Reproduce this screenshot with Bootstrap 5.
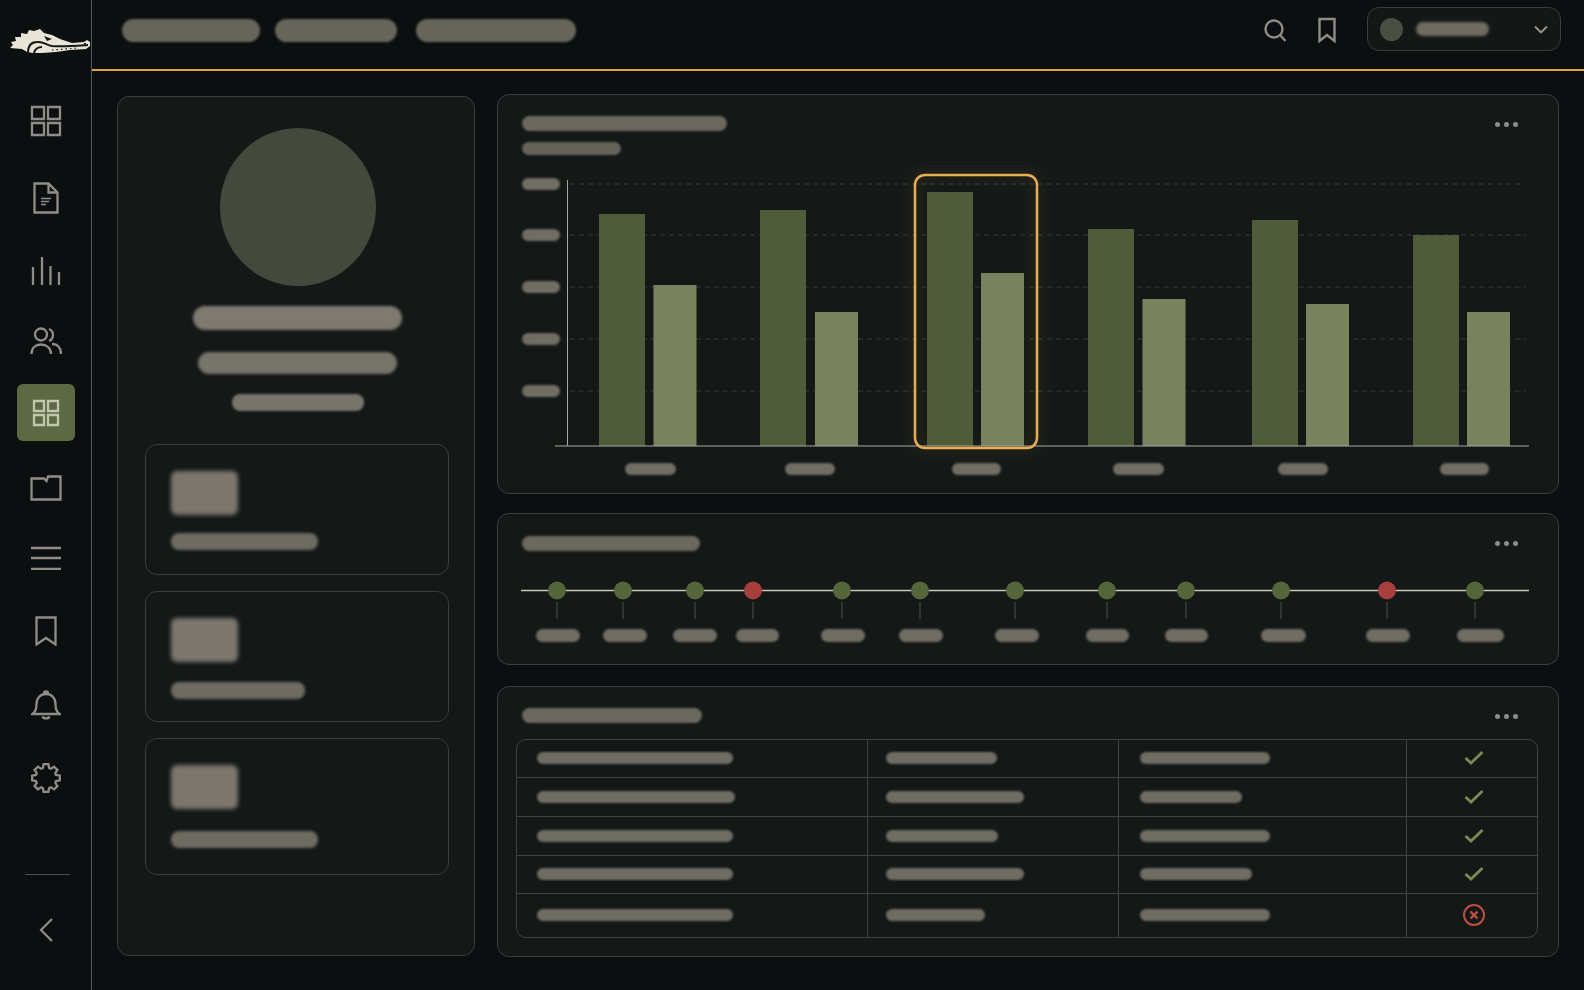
<!doctype html>
<html lang="en">

<head>
  <meta charset="utf-8">
  <meta name="viewport" content="width=device-width, initial-scale=1">
  <title>Dashboard</title>

  <link href="https://cdn.jsdelivr.net/npm/bootstrap@5.3.0/dist/css/bootstrap.min.css" rel="stylesheet">

  <style>
    body {
      background-color: #0c0f0f;
      font-family: "Liberation Sans", sans-serif;
      height: 990px;
      overflow: hidden;
    }

    .rail {
      width: 92px;
      height: 990px;
      border-right: 1px solid #55595a;
      flex-shrink: 0;
    }

    .rail-logo {
      height: 92px;
    }

    .rail-item {
      width: 58px;
      height: 57px;
      margin-bottom: 16px;
      border-radius: 6px;
      color: #8f8d86;
      margin-left: 17px;
    }

    .rail-item svg {
      fill: none;
      stroke: currentColor;
      stroke-width: 2.300;
    }

    .rail-item:nth-child(2) { margin-bottom: 20px; }
    .rail-item:nth-child(4) { margin-bottom: 13px; }
    .rail-item:nth-child(5) { margin-bottom: 15px; }
    .rail-item:nth-child(6) { margin-bottom: 18px; }
    .rail-item:nth-child(7) { margin-bottom: 13px; }
    .rail-item:nth-child(10) { margin-bottom: 17px; }

    .rail-active {
      background-color: #5b6a42;
      color: #c3c6ae;
    }

    .rail-rule {
      width: 45px;
      height: 1px;
      background-color: #4c4f4e;
      margin: 52px 0 42px 25px;
    }

    .topbar {
      height: 71px;
      border-bottom: 2px solid #e0a64e;
      padding: 7px 23px 0 30px;
    }

    .top-pill {
      height: 23px;
      border-radius: 12px;
      background-color: #66655a;
      filter: blur(1px);
    }

    .top-pill-a { width: 138px; margin-right: 15px; }
    .top-pill-b { width: 122px; margin-right: 19px; }
    .top-pill-c { width: 160px; }

    .top-icon {
      fill: none;
      stroke: #8f8d86;
      stroke-width: 2.400;
      margin-top: 10px;
    }

    .top-mark {
      margin-left: 31px;
      margin-right: 31px;
    }

    .user-box {
      width: 194px;
      height: 44px;
      border: 1px solid #393e3d;
      border-radius: 12px;
      background-color: #131716;
      padding: 0 12px;
    }

    .user-dot {
      width: 23px;
      height: 23px;
      border-radius: 50%;
      background-color: #4a4e40;
    }

    .user-name {
      width: 73px;
      height: 14px;
      border-radius: 7px;
      background-color: #6f6d62;
      filter: blur(1.5px);
      margin-left: 13px;
    }

    .content {
      padding-top: 23px;
      padding-left: 25px;
      gap: 22px;
    }

    .panel {
      background-color: #141817;
      border: 1px solid #3a3f3e;
      border-radius: 12px;
    }

    .side-panel {
      width: 358px;
      height: 860px;
      margin-top: 2px;
      padding: 31px 24px 0 27px;
    }

    .avatar {
      width: 156px;
      height: 158px;
      border-radius: 50%;
      background-color: #45483c;
      margin: 0 auto 20px 75px;
    }

    .blur-bar {
      background-color: #77746a;
      filter: blur(1.5px);
    }

    .name-a { width: 209px; height: 24px; border-radius: 12px; margin: 0 0 22px 48px; background-color: #7e7a70; }
    .name-b { width: 199px; height: 22px; border-radius: 11px; margin: 0 0 20px 53px; }
    .name-c { width: 132px; height: 17px; border-radius: 8px; margin: 0 0 33px 87px; filter: blur(1px); }

    .sub-card {
      width: 304px;
      border: 1px solid #3a3f3e;
      border-radius: 12px;
      padding: 26px 0 0 25px;
      margin-bottom: 16px;
    }

    .sub-square {
      width: 67px;
      height: 44px;
      border-radius: 6px;
      background-color: #7b776d;
      filter: blur(2px);
    }

    .sub-line {
      height: 17px;
      border-radius: 8px;
      background-color: #6e6c62;
      filter: blur(1.5px);
    }

    .sub-one { height: 131px; }
    .sub-one .sub-line { margin-top: 18px; width: 147px; }
    .sub-two { height: 131px; }
    .sub-two .sub-line { margin-top: 20px; width: 134px; }
    .sub-three { height: 137px; }
    .sub-three .sub-line { margin-top: 22px; width: 147px; }

    .right-col {
      width: 1062px;
    }

    .chart-panel { height: 400px; }
    .line-panel { height: 152px; margin-top: 19px; }
    .table-panel { height: 271px; margin-top: 21px; }

    .panel-title {
      height: 15px;
      border-radius: 8px;
      background-color: #6b685e;
      filter: blur(1px);
    }

    .panel-sub {
      width: 99px;
      height: 13px;
      border-radius: 7px;
      background-color: #66645a;
      filter: blur(1px);
      margin-top: 11px;
    }

    .panel-head {
      padding-left: 24px;
      padding-right: 40px;
    }

    .chart-panel .panel-head { padding-top: 21px; height: 70px; }
    .chart-panel .panel-title { width: 205px; }
    .line-panel .panel-head { padding-top: 22px; height: 46px; }
    .line-panel .panel-title { width: 178px; }
    .table-panel .panel-head { padding-top: 21px; height: 52px; }
    .table-panel .panel-title { width: 180px; }

    .more-dots {
      gap: 4px;
      padding-top: 6px;
    }

    .line-panel .more-dots { padding-top: 5px; }

    .more-dots i {
      display: block;
      width: 5px;
      height: 5px;
      border-radius: 50%;
      background-color: #8f8d88;
    }

    .chart-svg { display: block; }

    .grid-table {
      margin: 0 20px 0 18px;
      border: 1px solid #3f4443;
      border-radius: 10px;
      overflow: hidden;
    }

    .grid-table .table {
      --bs-table-bg: transparent;
      --bs-table-color: #8f8d88;
      table-layout: fixed;
      margin-bottom: 0;
    }

    .grid-table td {
      border-bottom: 1px solid #3f4443;
      border-right: 1px solid #3f4443;
      padding: 0 0 0 20px;
      vertical-align: middle;
      height: 38px;
    }

    .grid-table td:nth-child(2) { padding-left: 18px; }
    .grid-table td:nth-child(3) { padding-left: 21px; }
    .grid-table tr:first-child td { height: 37px; }
    .grid-table tr:nth-child(2) td,
    .grid-table tr:nth-child(3) td { height: 39px; }
    .grid-table tr:last-child td { border-bottom: 0; height: 44px; }
    .grid-table td:last-child { border-right: 0; padding-left: 4px; text-align: center; }

    .cell-line {
      height: 12px;
      border-radius: 6px;
      background-color: #6f6d63;
      filter: blur(.8px);
    }

    .cell-mark { display: block; margin: 0 auto; }
  </style>
</head>

<body>
  <div class="d-flex">
    <aside class="rail d-flex flex-column">
      <div class="rail-logo">
        <svg width="92" height="60" viewBox="0 0 92 60">
          <path fill="#e9e5d6" d="M10 48 13 45 11 42 16 41 15 37 21 37 21 33 27 34 29 30 34 31 40 29 44 33 52 35 60 39 72 43 84 42 87 40 90 42 90 46 86 49 70 50 56 52 42 53 33 53 27 52 22 49Z" />
          <path fill="none" stroke="#14181a" stroke-width="2" d="M28 53C28 46 31 42 37 42 43 41 46 45 52 46 62 47 74 46 88 45M34 53C35 49 37 47 42 47" />
          <path fill="#14181a" d="M44 36 52 39 47 41ZM84 43h2v1.500h-2Z" />
          <path fill="none" stroke="#14181a" stroke-width="1.200" stroke-dasharray="1.500 3" d="M52 50 78 48" />
        </svg>
      </div>

      <div class="rail-item d-flex align-items-center justify-content-center">
        <svg width="32" height="32" viewBox="0 0 32 32"><path d="M2 2h12v12H2zM18 2h12v12H18zM2 18h12v12H2zM18 18h12v12H18z" /></svg>
      </div>
      <div class="rail-item d-flex align-items-center justify-content-center">
        <svg width="26" height="32" viewBox="0 0 26 32"><path d="M1.500 1.500h14l9 9v20h-23zM15.500 1.500v9h9" /><path stroke-width="1.600" d="M8 16.500h10M8 19.500h8M8 22.500h5" /></svg>
      </div>
      <div class="rail-item d-flex align-items-center justify-content-center">
        <svg width="30" height="30" viewBox="0 0 30 30"><path d="M2 29V11M11 29V1M19.500 29V10M28 29V16" /></svg>
      </div>
      <div class="rail-item d-flex align-items-center justify-content-center">
        <svg width="32" height="28" viewBox="0 0 32 28"><circle cx="11" cy="7.500" r="6" /><path d="M19 2a6.500 6.500 0 0 1 0 12M1.500 27c0-6 4-9.500 9.500-9.500s10 3.500 10 9.500M22 17c5.500 0 9 4 9 10" /></svg>
      </div>
      <div class="rail-item rail-active d-flex align-items-center justify-content-center">
        <svg width="28" height="28" viewBox="0 0 28 28"><path d="M2 2h10v10H2zM16 2h10v10H16zM2 16h10v10H2zM16 16h10v10H16z" /></svg>
      </div>
      <div class="rail-item d-flex align-items-center justify-content-center">
        <svg width="32" height="26" viewBox="0 0 32 26"><path d="M1.500 3.500H14l2.500 2.500 1.500-4.500h12.500v23h-29z" /></svg>
      </div>
      <div class="rail-item d-flex align-items-center justify-content-center">
        <svg width="30" height="24" viewBox="0 0 30 24"><path d="M0 2h30M0 12h30M0 23h30" /></svg>
      </div>
      <div class="rail-item d-flex align-items-center justify-content-center">
        <svg width="22" height="30" viewBox="0 0 22 30"><path d="M1.500 1.500h19v27L11 22l-9.500 6.500z" /></svg>
      </div>
      <div class="rail-item d-flex align-items-center justify-content-center">
        <svg width="30" height="32" viewBox="0 0 30 32"><path d="M1.500 26c3-2 4-5 4-10 0-6 4-10 9.500-10s9.500 4 9.500 10c0 5 1 8 4 10zM13 5.500a2 2 0 0 1 4 0M11.500 28.500c1 2.500 6 2.500 7 0" /></svg>
      </div>
      <div class="rail-item d-flex align-items-center justify-content-center">
        <svg width="30" height="30" viewBox="0 0 30 30"><path id="gearPath" /></svg>
      </div>

      <div class="rail-rule"></div>

      <div class="text-center">
        <svg width="16" height="26" viewBox="0 0 16 26" fill="none" stroke="#8f8d86" stroke-width="2.200"><path d="M14 2 3 13l11 11" /></svg>
      </div>
    </aside>

    <div class="flex-grow-1">
      <header class="topbar d-flex justify-content-between">
        <div class="d-flex pt-2 mt-1">
          <div class="top-pill top-pill-a"></div>
          <div class="top-pill top-pill-b"></div>
          <div class="top-pill top-pill-c"></div>
        </div>
        <div class="d-flex align-items-start">
          <svg class="top-icon" width="24" height="26" viewBox="0 0 24 26"><circle cx="11" cy="12" r="8.500" /><path d="m17 18 5.500 6" /></svg>
          <svg class="top-icon top-mark" width="18" height="26" viewBox="0 0 18 26"><path d="M1.500 2h15v22L9 18l-7.500 6z" /></svg>
          <div class="user-box d-flex align-items-center">
            <div class="user-dot"></div>
            <div class="user-name"></div>
            <svg class="ms-auto" width="14" height="9" viewBox="0 0 14 9" fill="none" stroke="#9a9890" stroke-width="1.800"><path d="m1 1.500 6 6 6-6" /></svg>
          </div>
        </div>
      </header>

      <main class="content d-flex align-items-start">
        <section class="panel side-panel">
          <div class="avatar"></div>
          <div class="blur-bar name-a"></div>
          <div class="blur-bar name-b"></div>
          <div class="blur-bar name-c"></div>
          <div class="sub-card sub-one">
            <div class="sub-square"></div>
            <div class="sub-line"></div>
          </div>
          <div class="sub-card sub-two">
            <div class="sub-square"></div>
            <div class="sub-line"></div>
          </div>
          <div class="sub-card sub-three">
            <div class="sub-square"></div>
            <div class="sub-line"></div>
          </div>
        </section>

        <div class="right-col">
          <section class="panel chart-panel">
            <div class="panel-head d-flex justify-content-between">
              <div>
                <div class="panel-title"></div>
                <div class="panel-sub"></div>
              </div>
              <div class="more-dots d-flex"><i></i><i></i><i></i></div>
            </div>
            <svg id="barChart" class="chart-svg" width="1060" height="328" viewBox="498 165 1060 328"></svg>
          </section>

          <section class="panel line-panel">
            <div class="panel-head d-flex justify-content-between">
              <div class="panel-title"></div>
              <div class="more-dots d-flex"><i></i><i></i><i></i></div>
            </div>
            <svg id="timeline" class="chart-svg" width="1060" height="104" viewBox="498 560 1060 104"></svg>
          </section>

          <section class="panel table-panel">
            <div class="panel-head d-flex justify-content-between">
              <div class="panel-title"></div>
              <div class="more-dots d-flex"><i></i><i></i><i></i></div>
            </div>
            <div class="grid-table">
              <table class="table">
                <colgroup>
                  <col width="350">
                  <col width="251">
                  <col width="288">
                  <col>
                </colgroup>
                <tbody id="rows"></tbody>
              </table>
            </div>
          </section>
        </div>
      </main>
    </div>
  </div>

  <script src="https://cdn.jsdelivr.net/npm/bootstrap@5.3.0/dist/js/bootstrap.bundle.min.js"></script>

  <script>
    const BLUR = '<defs><filter id="soft" x="-10%" y="-50%" width="120%" height="200%"><feGaussianBlur stdDeviation="1"/></filter>'
      + '<filter id="glow" x="-30%" y="-20%" width="160%" height="140%"><feGaussianBlur stdDeviation="8"/></filter></defs>';

    // 8 tooth cog for the rail
    function gear(cx, teeth, outer, inner) {
      const pts = [];
      for (let i = 0; i < teeth; i++) {
        const a = i * 2 * Math.PI / teeth;
        [[-0.3, inner], [-0.17, outer], [0.17, outer], [0.3, inner]].forEach(p => {
          pts.push((cx + p[1] * Math.cos(a + p[0])).toFixed(1) + ' ' + (cx + p[1] * Math.sin(a + p[0])).toFixed(1));
        });
      }
      return 'M' + pts.join('L') + 'Z';
    }
    document.getElementById('gearPath').setAttribute('d', gear(15, 8, 14, 10.5));

    function label(x1, x2, y1, y2) {
      const h = y2 - y1;
      return `<rect x="${x1}" y="${y1}" width="${x2 - x1}" height="${h}" rx="${h / 2}" fill="#6f6d63" filter="url(#soft)"/>`;
    }

    // [dark x, dark top, light x, light top]
    const groups = [
      [599, 214, 653.5, 285],
      [760, 210, 815, 312],
      [927, 192, 981, 273],
      [1088, 229, 1142.5, 299],
      [1252, 220, 1306, 304],
      [1413, 235, 1467, 312]
    ];
    const AXIS = 446;

    let chart = BLUR;
    [184, 235, 287, 339, 391].forEach(y => {
      chart += `<line x1="570" x2="1526" y1="${y}" y2="${y}" stroke="#343837" stroke-dasharray="5 4"/>`;
      chart += label(522, 560, y - 6, y + 6);
    });
    chart += '<rect x="915" y="175" width="122" height="273" rx="10" fill="none" stroke="#e3a84e" stroke-width="5" opacity=".2" filter="url(#glow)"/>';
    groups.forEach(g => {
      chart += `<rect x="${g[0]}" y="${g[1]}" width="46" height="${AXIS - g[1]}" fill="#4f5c3a"/>`;
      chart += `<rect x="${g[2]}" y="${g[3]}" width="43" height="${AXIS - g[3]}" fill="#78835d"/>`;
    });
    chart += `<line x1="567.500" x2="567.500" y1="180" y2="${AXIS}" stroke="#a9a9a2"/>`;
    chart += `<line x1="555" x2="1529" y1="${AXIS}" y2="${AXIS}" stroke="#a9a9a2"/>`;
    [[625, 676], [785, 835], [952, 1001], [1113, 1164], [1278, 1328], [1440, 1489]].forEach(p => {
      chart += label(p[0], p[1], 463, 475);
    });
    chart += '<rect x="915" y="175" width="122" height="273" rx="10" fill="none" stroke="#e8ae4f" stroke-width="2.500"/>';
    document.getElementById('barChart').innerHTML = chart;

    // [dot x, label x1, label x2, red?]
    const events = [
      [557, 536, 580], [623, 603, 647], [695, 673, 717], [753, 736, 779, true],
      [842, 821, 865], [920, 899, 943], [1015, 995, 1039], [1107, 1086, 1129],
      [1186, 1165, 1208], [1281, 1261, 1306], [1387, 1366, 1410, true], [1475, 1457, 1504]
    ];
    let line = BLUR + '<line x1="521" x2="1529" y1="590.500" y2="590.500" stroke="#c9c7b8" stroke-width="1.500"/>';
    events.forEach(e => {
      line += `<line x1="${e[0]}" x2="${e[0]}" y1="602" y2="619" stroke="#4d514e"/>`;
      line += `<circle cx="${e[0]}" cy="590.500" r="9" fill="${e[3] ? '#a83f3f' : '#55673a'}"/>`;
      line += label(e[1], e[2], 629, 642);
    });
    document.getElementById('timeline').innerHTML = line;

    const CHECK = '<svg class="cell-mark" width="20" height="16" viewBox="0 0 20 16" fill="none" stroke="#7a8a55" stroke-width="2.800"><path d="m1.500 8 5.500 5L18.500 2"/></svg>';
    const CROSS = '<svg class="cell-mark" width="24" height="24" viewBox="0 0 24 24" fill="none" stroke="#c04e42" stroke-width="2"><circle cx="12" cy="12" r="10"/><path stroke-width="2.400" d="m8.500 8.500 7 7m0-7-7 7"/></svg>';
    const rows = [
      [196, 111, 130, CHECK],
      [198, 138, 102, CHECK],
      [196, 112, 130, CHECK],
      [196, 138, 112, CHECK],
      [196, 99, 130, CROSS]
    ];
    document.getElementById('rows').innerHTML = rows.map(r => `
      <tr>
        <td><div class="cell-line" style="width:${r[0]}px"></div></td>
        <td><div class="cell-line" style="width:${r[1]}px"></div></td>
        <td><div class="cell-line" style="width:${r[2]}px"></div></td>
        <td>${r[3]}</td>
      </tr>`).join('');
  </script>
</body>

</html>
